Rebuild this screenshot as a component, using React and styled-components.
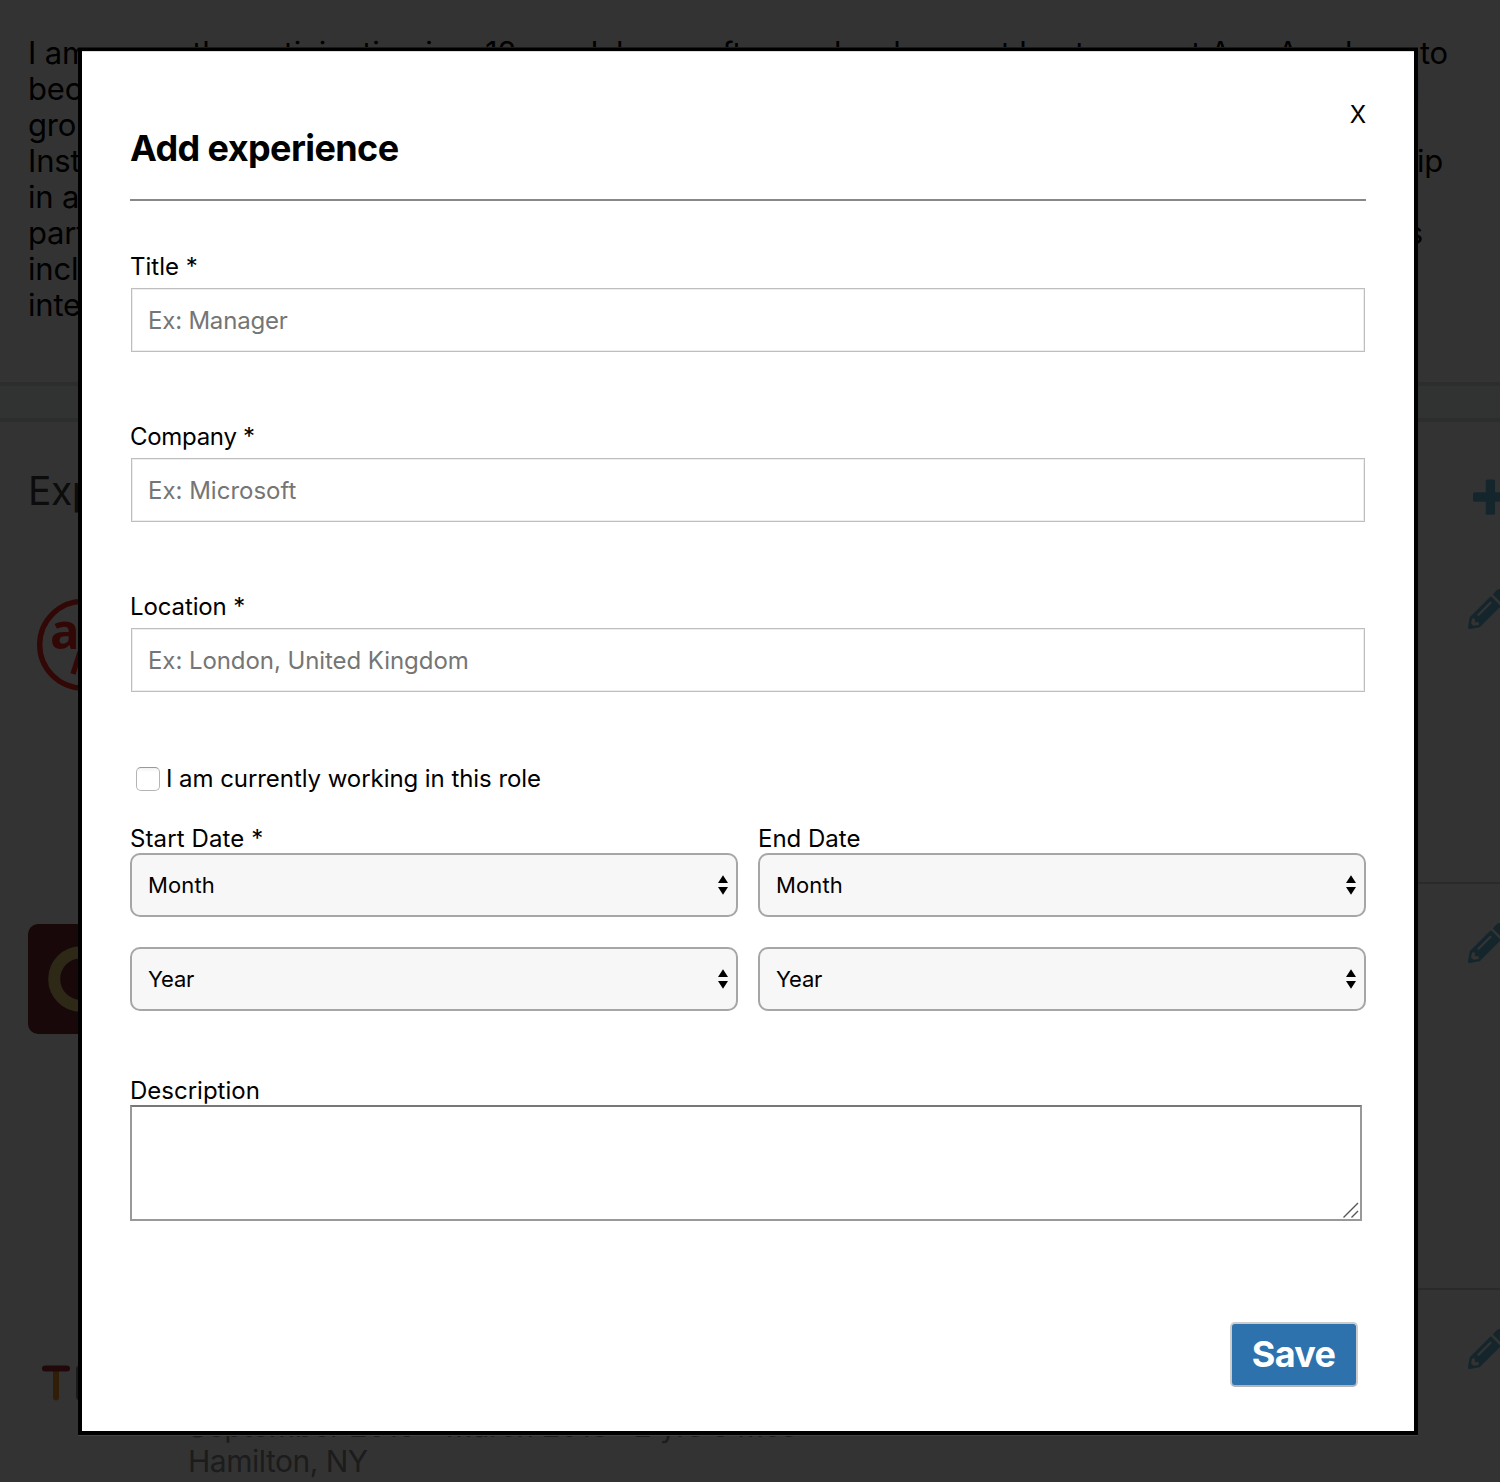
import React from 'react';
import styled, { createGlobalStyle } from 'styled-components';
import { FaPencilAlt } from 'react-icons/fa';

const GlobalStyle = createGlobalStyle`
  *, *::before, *::after { box-sizing: border-box; }
  body { margin: 0; background: #fff; }
  body, input, select, textarea, button {
    font-family: Inter, 'Liberation Sans', sans-serif;
    -webkit-font-smoothing: antialiased;
  }
`;

const Page = styled.div`
  position: relative;
  width: 1500px;
  height: 1482px;
  overflow: hidden;
  background: #fff;
`;

const Profile = styled.div`
  width: 1508px;
`;

const About = styled.section`
  height: 382px;
  padding: 35px 0 0 28px;
`;

const BioLine = styled.p`
  display: flex;
  justify-content: space-between;
  width: ${(p) => p.$width}px;
  margin: 0;
  font-size: 31px;
  line-height: 36px;
  letter-spacing: ${(p) => p.$spacing || '-0.2px'};
  white-space: nowrap;
  color: #000;
`;

const Band = styled.div`
  height: 40px;
  background: #f3f8f7;
  border: solid #dce1e0;
  border-width: 4px 0;
`;

const SectionHead = styled.header`
  display: flex;
  justify-content: space-between;
  height: 144px;
  padding: 44px 0 0 28px;
  color: #69b9dc;

  svg { margin-top: 13px; }
`;

const SectionTitle = styled.h2`
  margin: 0;
  font-size: 39px;
  font-weight: 400;
  line-height: 49px;
  letter-spacing: -0.5px;
  color: #3c3c3c;
`;

const Entry = styled.article`
  display: grid;
  grid-template-columns: 160px 1fr;
  height: ${(p) => p.$height}px;
  padding-left: 28px;
`;

const EntryBody = styled.div`
  display: flex;
  justify-content: space-between;
  padding-top: ${(p) => p.$top}px;
  border-bottom: 2px solid #d2d2d2;
  color: #69b9dc;
`;

const Meta = styled.div`
  padding-top: 79px;
  font-size: 30px;
  color: #8c8c8c;
  white-space: nowrap;
`;

const MetaLine = styled.div`
  line-height: ${(p) => p.$leading}px;
  letter-spacing: ${(p) => p.$spacing || 0};
`;

const Logo = styled.svg`
  display: block;
  margin-top: ${(p) => p.$top}px;
`;

const Overlay = styled.div`
  position: absolute;
  inset: 0;
  display: flex;
  align-items: flex-start;
  padding: 48px 0 0 78px;
  background: rgba(0, 0, 0, 0.8);
`;

const Modal = styled.form`
  display: flex;
  flex-direction: column;
  width: 1340px;
  height: 1387px;
  padding: 50px 48px 0;
  border: 4px solid #000;
  border-top-width: 3px;
  background: #fff;
  box-shadow: 0 -1px 0 #1a1a1a, 0 1px 0 #444, inset 0 1px 0 #ddd;
  color: #000;
`;

const CloseButton = styled.button`
  align-self: flex-end;
  height: 25px;
  padding: 0;
  border: 0;
  background: none;
  font-size: 24px;
  line-height: 28px;
  color: #000;
`;

const Heading = styled.h1`
  margin: 0 0 29px;
  font-size: 36px;
  font-weight: 700;
  line-height: 44px;
  letter-spacing: -0.6px;
`;

const Rule = styled.hr`
  width: 100%;
  height: 2px;
  margin: 0 0 52px;
  border: 0;
  background: #888;
`;

const Label = styled.label`
  display: block;
  font-size: 24px;
  line-height: 28px;
  letter-spacing: ${(p) => p.$spacing || 0};
  white-space: nowrap;
`;

const Field = styled.div`
  display: flex;
  flex-direction: column;
  gap: 7px;
  margin-bottom: ${(p) => (p.$last ? 73 : 71)}px;
`;

const TextInput = styled.input`
  height: 64px;
  margin: 0 1px;
  padding: 1px 16px 0;
  border: 1px solid #bebebe;
  border-radius: 0;
  outline: 0;
  box-shadow: inset 0 0 0 1px #eee;
  background: #fff;
  font-size: 24px;
  letter-spacing: ${(p) => p.$spacing || 0};

  &::placeholder { color: #757575; opacity: 1; }
`;

const CheckRow = styled.div`
  display: flex;
  align-items: center;
  gap: 6px;
  height: 28px;
  margin-bottom: 32px;
  padding-left: 6px;
`;

const Checkbox = styled.input`
  appearance: none;
  width: 24px;
  height: 24px;
  margin: 0;
  border: 1px solid #b4b4b4;
  border-top-color: #999;
  border-radius: 5px;
  background: linear-gradient(#f2f2f2, #fff 4px);
`;

const Dates = styled.div`
  display: grid;
  grid-template-columns: 1fr 1fr;
  gap: 20px;
  margin-bottom: 66px;
`;

const DateColumn = styled.div`
  display: flex;
  flex-direction: column;
`;

const SelectBox = styled.div`
  position: relative;
  display: flex;
  margin-top: ${(p) => p.$top}px;
`;

const Select = styled.select`
  appearance: none;
  width: 100%;
  height: 64px;
  padding: 0 16px;
  border: 2px solid #a6a6a6;
  border-radius: 10px;
  background: #f7f7f7;
  font-size: 22px;
  letter-spacing: ${(p) => p.$spacing || 0};
  color: #000;
`;

const Arrows = styled.svg`
  position: absolute;
  top: 22px;
  right: 10px;
  pointer-events: none;
`;

const AreaBox = styled.div`
  position: relative;
  display: flex;
  width: 1232px;
  margin: 0 0 101px;
`;

const TextArea = styled.textarea`
  width: 100%;
  height: 116px;
  border: 2px solid #999;
  border-top-color: #777;
  border-radius: 0;
  outline: 0;
  resize: none;
  background: #fff;
`;

const Grip = styled.svg`
  position: absolute;
  right: 3px;
  bottom: 3px;
`;

const SaveButton = styled.button`
  align-self: flex-end;
  width: 128px;
  height: 65px;
  margin-right: 8px;
  padding: 0 1px 2px 0;
  border: 2px solid #ccc;
  border-bottom-color: #b4b4b4;
  border-radius: 5px;
  background: #2d72ad;
  font-size: 36px;
  font-weight: 700;
  line-height: 58px;
  letter-spacing: -0.7px;
  color: #fff;
`;

const bio = [
  { start: 'I am currently participating in a 12-week long software development bootcamp at App Academy', end: 'to', width: 1420, spacing: '-0.17px' },
  { start: 'become', end: 'and', width: 1392 },
  { start: 'group', end: '', width: 1380 },
  { start: 'Institute', end: 'internship', width: 1415 },
  { start: 'in a', end: '', width: 1380 },
  { start: 'particular', end: 'interests', width: 1395 },
  { start: 'include', end: '', width: 1380 },
  { start: 'international', end: '', width: 1380 },
];

const textFields = [
  { id: 'title', label: 'Title *', hint: 'Ex: Manager', hintSpacing: '-0.2px' },
  { id: 'company', label: 'Company *', hint: 'Ex: Microsoft', spacing: '-0.3px' },
  { id: 'location', label: 'Location *', hint: 'Ex: London, United Kingdom', spacing: '-0.12px', hintSpacing: '-0.07px' },
];

function PlusIcon() {
  return (
    <svg width="36" height="36" viewBox="0 0 36 36" fill="currentColor">
      <rect x="1" y="13.2" width="35" height="9.6" rx="1.6" />
      <rect x="13.7" y="0.4" width="9.4" height="35.4" rx="1.6" />
    </svg>
  );
}

function AcademyLogo() {
  return (
    <Logo width="110" height="110" viewBox="0 0 110 110" fill="none" $top={23}>
      <circle cx="55" cy="55.7" r="43.3" stroke="#fa281e" strokeWidth="5.4" />
      <text x="22" y="59.5" fontFamily="Open Sans" fontSize="49" fontWeight="700" fill="#fa281e">a</text>
      <path d="M52 63L45 85" stroke="#fa281e" strokeWidth="5.4" />
    </Logo>
  );
}

function CollegeLogo() {
  return (
    <Logo width="110" height="110" viewBox="0 0 110 110" fill="none" $top={40}>
      <rect width="110" height="110" rx="10" fill="#78282d" />
      <circle cx="53" cy="55" r="26.8" stroke="#e6c86e" strokeWidth="12" />
    </Logo>
  );
}

function TiaaLogo() {
  return (
    <Logo width="110" height="110" viewBox="0 0 110 110" fill="none" strokeWidth="6" strokeLinecap="round" $top={40}>
      <path d="M28 41V67.5" stroke="#f0962d" />
      <path d="M17 38.5H39" stroke="#a0283a" />
      <path d="M51 39V67" stroke="#828282" />
    </Logo>
  );
}

function Dropdown({ value, top, spacing }) {
  return (
    <SelectBox $top={top}>
      <Select defaultValue={value} aria-label={value} $spacing={spacing}>
        <option>{value}</option>
      </Select>
      <Arrows width="10" height="20" viewBox="0 0 10 20">
        <path d="M5 0.2L10 8H0ZM5 19.8L0 12H10Z" fill="#000" />
      </Arrows>
    </SelectBox>
  );
}

function DateFields({ label, spacing }) {
  return (
    <DateColumn>
      <Label $spacing={spacing}>{label}</Label>
      <Dropdown value="Month" top={0} spacing="0.15px" />
      <Dropdown value="Year" top={30} spacing="-0.2px" />
    </DateColumn>
  );
}

function ProfilePage() {
  return (
    <Profile>
      <About>
        {bio.map((line) => (
          <BioLine key={line.start} $width={line.width} $spacing={line.spacing}>
            <span>{line.start}</span>
            <span>{line.end}</span>
          </BioLine>
        ))}
      </About>
      <Band />
      <SectionHead>
        <SectionTitle>Experience</SectionTitle>
        <PlusIcon />
      </SectionHead>
      <Entry $height={318}>
        <AcademyLogo />
        <EntryBody $top={23}>
          <span />
          <FaPencilAlt size={40} />
        </EntryBody>
      </Entry>
      <Entry $height={406}>
        <CollegeLogo />
        <EntryBody $top={39}>
          <span />
          <FaPencilAlt size={40} />
        </EntryBody>
      </Entry>
      <Entry $height={300}>
        <TiaaLogo />
        <EntryBody $top={39}>
          <Meta>
            <MetaLine $leading={36} $spacing="-0.28px">September 2015 - March 2018 · 2 yrs 6 mos</MetaLine>
            <MetaLine $leading={34} $spacing="-0.5px">Hamilton, NY</MetaLine>
          </Meta>
          <FaPencilAlt size={40} />
        </EntryBody>
      </Entry>
    </Profile>
  );
}

function ExperienceForm() {
  return (
    <Modal onSubmit={(e) => e.preventDefault()}>
      <CloseButton type="button">X</CloseButton>
      <Heading>Add experience</Heading>
      <Rule />
      {textFields.map((field, i) => (
        <Field key={field.id} $last={i === textFields.length - 1}>
          <Label htmlFor={field.id} $spacing={field.spacing}>{field.label}</Label>
          <TextInput id={field.id} placeholder={field.hint} $spacing={field.hintSpacing} />
        </Field>
      ))}
      <CheckRow>
        <Checkbox type="checkbox" id="current" />
        <Label htmlFor="current" $spacing="-0.06px">I am currently working in this role</Label>
      </CheckRow>
      <Dates>
        <DateFields label="Start Date *" spacing="0.12px" />
        <DateFields label="End Date" />
      </Dates>
      <Label htmlFor="description">Description</Label>
      <AreaBox>
        <TextArea id="description" />
        <Grip width="16" height="16" viewBox="0 0 16 16" fill="none" stroke="#555" strokeWidth="1.4">
          <path d="M0.5 15.5L15 1M8.5 15.5L15 9" />
        </Grip>
      </AreaBox>
      <SaveButton type="submit">Save</SaveButton>
    </Modal>
  );
}

export default function App() {
  return (
    <>
      <GlobalStyle />
      <Page>
        <ProfilePage />
        <Overlay>
          <ExperienceForm />
        </Overlay>
      </Page>
    </>
  );
}
